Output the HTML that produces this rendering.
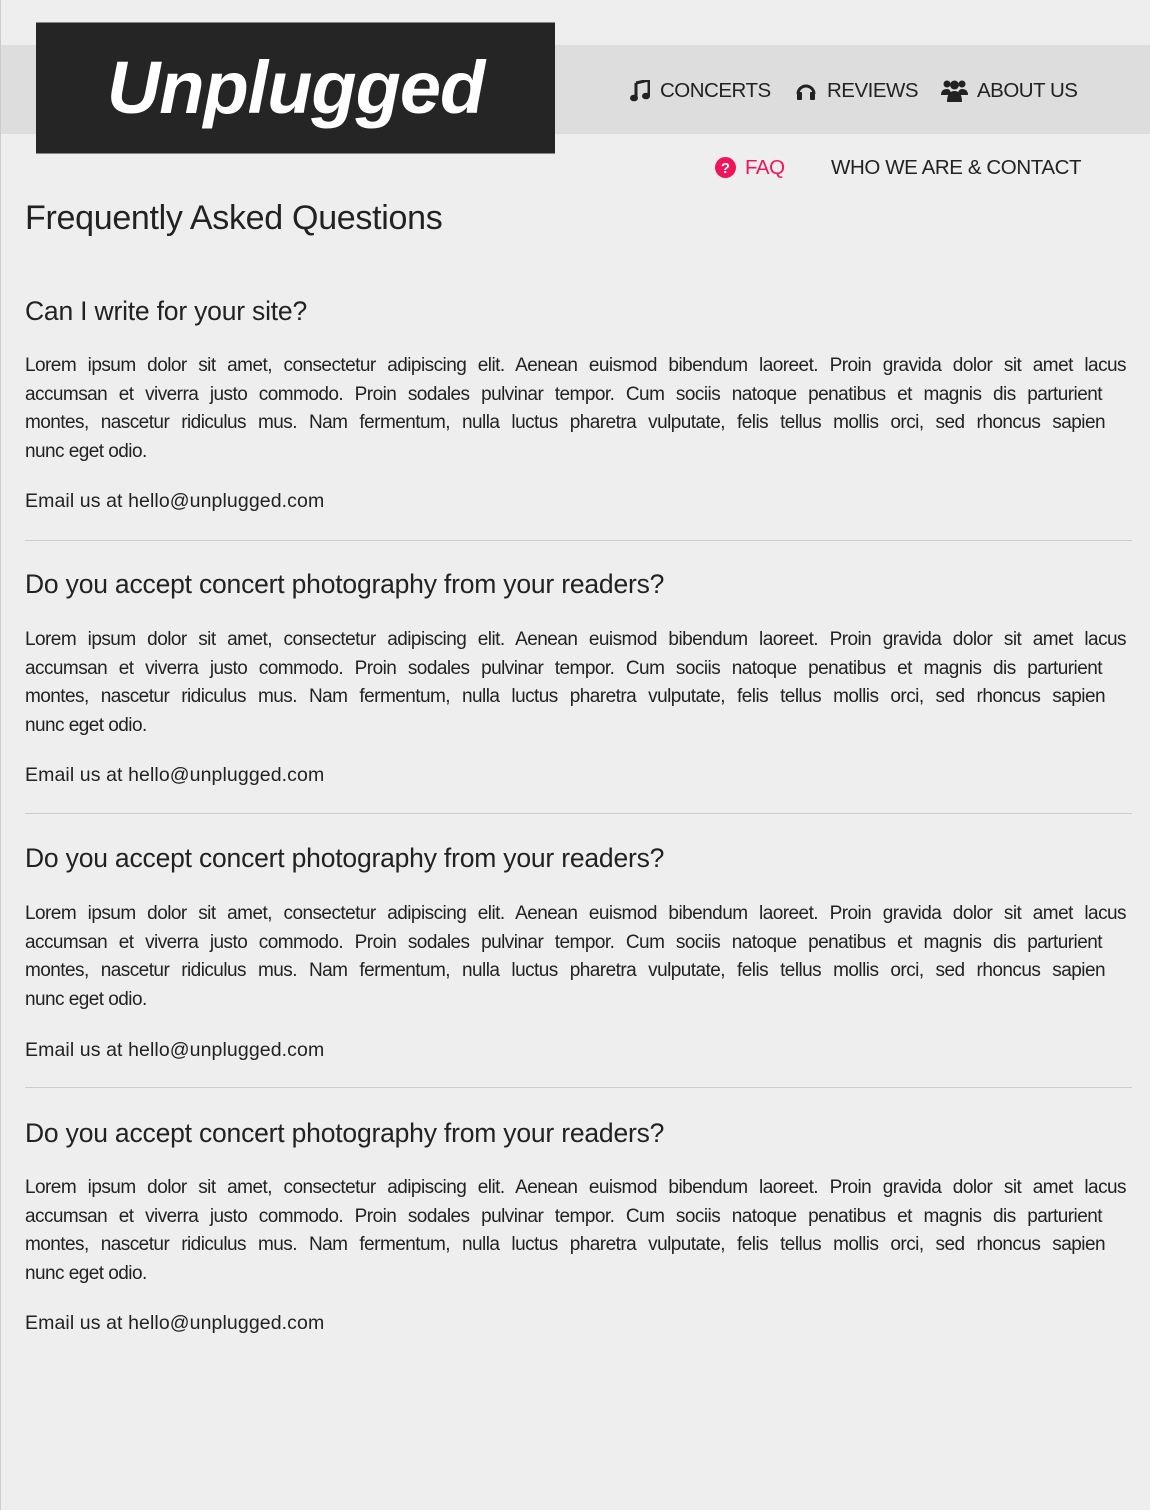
<!DOCTYPE html>
<html><head><meta charset="utf-8"><style>
body{margin:0;width:1150px;height:1510px;background:#eee;font-family:"Liberation Sans",sans-serif;color:#222;position:relative;overflow:hidden}
.lb{position:absolute;left:0;top:0;width:1px;height:1510px;background:#ccc}
.bar{position:absolute;left:1px;top:45px;width:1149px;height:89px;background:#ddd}
.logo{position:absolute;left:36px;top:22px;width:519px;height:130px;background:#252525;border-top:1px solid #888;border-bottom:1px solid #888;color:#fff;font-weight:bold;font-style:italic;font-size:74px;text-align:center;line-height:130px;letter-spacing:-1px}
.nav{position:absolute;font-size:20.5px;color:#222;white-space:nowrap;line-height:26px;letter-spacing:-0.5px}
.a{position:absolute;left:25px;white-space:nowrap}
.h1{font-size:34px;top:199px;letter-spacing:-0.3px}
.q{font-size:26.5px;line-height:30px;letter-spacing:-0.2px}
.p{font-size:19px;line-height:28.6px;letter-spacing:-0.55px}
.p span{display:block;text-align:justify;text-align-last:justify;white-space:nowrap}
.p span.l{text-align-last:left}
.e{font-size:19.5px;letter-spacing:0.1px}
.hr{position:absolute;left:25px;width:1107px;height:1px;background:#ccc}
</style></head><body>
<div class="lb"></div>
<div class="bar"></div>
<div class="logo">Unplugged</div>

<svg style="position:absolute;left:630px;top:80px" width="20" height="22" viewBox="0 0 20 22"><path d="M6 3 L19 0 V16" stroke="#222" stroke-width="3" fill="none"/><path d="M6 3 V18" stroke="#222" stroke-width="3"/><ellipse cx="4" cy="18" rx="4" ry="3.3" fill="#222"/><ellipse cx="16" cy="16" rx="4" ry="3.3" fill="#222"/></svg>
<div class="nav" style="left:660px;top:78px">CONCERTS</div>
<svg style="position:absolute;left:795px;top:81px" width="22" height="20" viewBox="0 0 22 20"><path d="M3 13 A8 8 0 0 1 19 13" stroke="#222" stroke-width="3" fill="none"/><rect x="2" y="11" width="5" height="8" rx="1" fill="#222"/><rect x="15" y="11" width="5" height="8" rx="1" fill="#222"/></svg>
<div class="nav" style="left:827px;top:78px">REVIEWS</div>
<svg style="position:absolute;left:941px;top:78px" width="27" height="24" viewBox="0 0 27 24"><circle cx="6" cy="6" r="3.5" fill="#222"/><circle cx="21" cy="6" r="3.5" fill="#222"/><circle cx="13.5" cy="7" r="4.5" fill="#222"/><path d="M0 17 Q0 11 6 11 Q10 11 10 17Z M17 17 Q17 11 21 11 Q27 11 27 17Z" fill="#222"/><path d="M6 24 Q6 13 13.5 13 Q21 13 21 24Z" fill="#222"/></svg>
<div class="nav" style="left:977px;top:78px">ABOUT US</div>

<svg style="position:absolute;left:715px;top:157px" width="21" height="21" viewBox="0 0 21 21"><circle cx="10.5" cy="10.5" r="10.5" fill="#f0145a"/><text x="10.5" y="16" font-family="Liberation Sans" font-weight="bold" font-size="15" fill="#fff" text-anchor="middle">?</text></svg>
<div class="nav" style="left:745px;top:155px;color:#f0145a">FAQ</div>
<div class="nav" style="left:831px;top:155px;letter-spacing:-0.4px">WHO WE ARE &amp; CONTACT</div>

<div class="a h1">Frequently Asked Questions</div>

<div class="a q" style="top:296px">Can I write for your site?</div>
<div class="a p" style="top:352px"><span style="width:1101px">Lorem ipsum dolor sit amet, consectetur adipiscing elit. Aenean euismod bibendum laoreet. Proin gravida dolor sit amet lacus</span><span style="width:1077px">accumsan et viverra justo commodo. Proin sodales pulvinar tempor. Cum sociis natoque penatibus et magnis dis parturient</span><span style="width:1080px">montes, nascetur ridiculus mus. Nam fermentum, nulla luctus pharetra vulputate, felis tellus mollis orci, sed rhoncus sapien</span><span class="l">nunc eget odio.</span></div>
<div class="a e" style="top:490px">Email us at hello@unplugged.com</div>
<div class="hr" style="top:540px"></div>

<div class="a q" style="top:569px">Do you accept concert photography from your readers?</div>
<div class="a p" style="top:626px"><span style="width:1101px">Lorem ipsum dolor sit amet, consectetur adipiscing elit. Aenean euismod bibendum laoreet. Proin gravida dolor sit amet lacus</span><span style="width:1077px">accumsan et viverra justo commodo. Proin sodales pulvinar tempor. Cum sociis natoque penatibus et magnis dis parturient</span><span style="width:1080px">montes, nascetur ridiculus mus. Nam fermentum, nulla luctus pharetra vulputate, felis tellus mollis orci, sed rhoncus sapien</span><span class="l">nunc eget odio.</span></div>
<div class="a e" style="top:764px">Email us at hello@unplugged.com</div>
<div class="hr" style="top:813px"></div>

<div class="a q" style="top:843px">Do you accept concert photography from your readers?</div>
<div class="a p" style="top:900px"><span style="width:1101px">Lorem ipsum dolor sit amet, consectetur adipiscing elit. Aenean euismod bibendum laoreet. Proin gravida dolor sit amet lacus</span><span style="width:1077px">accumsan et viverra justo commodo. Proin sodales pulvinar tempor. Cum sociis natoque penatibus et magnis dis parturient</span><span style="width:1080px">montes, nascetur ridiculus mus. Nam fermentum, nulla luctus pharetra vulputate, felis tellus mollis orci, sed rhoncus sapien</span><span class="l">nunc eget odio.</span></div>
<div class="a e" style="top:1039px">Email us at hello@unplugged.com</div>
<div class="hr" style="top:1087px"></div>

<div class="a q" style="top:1118px">Do you accept concert photography from your readers?</div>
<div class="a p" style="top:1174px"><span style="width:1101px">Lorem ipsum dolor sit amet, consectetur adipiscing elit. Aenean euismod bibendum laoreet. Proin gravida dolor sit amet lacus</span><span style="width:1077px">accumsan et viverra justo commodo. Proin sodales pulvinar tempor. Cum sociis natoque penatibus et magnis dis parturient</span><span style="width:1080px">montes, nascetur ridiculus mus. Nam fermentum, nulla luctus pharetra vulputate, felis tellus mollis orci, sed rhoncus sapien</span><span class="l">nunc eget odio.</span></div>
<div class="a e" style="top:1312px">Email us at hello@unplugged.com</div>
</body></html>
